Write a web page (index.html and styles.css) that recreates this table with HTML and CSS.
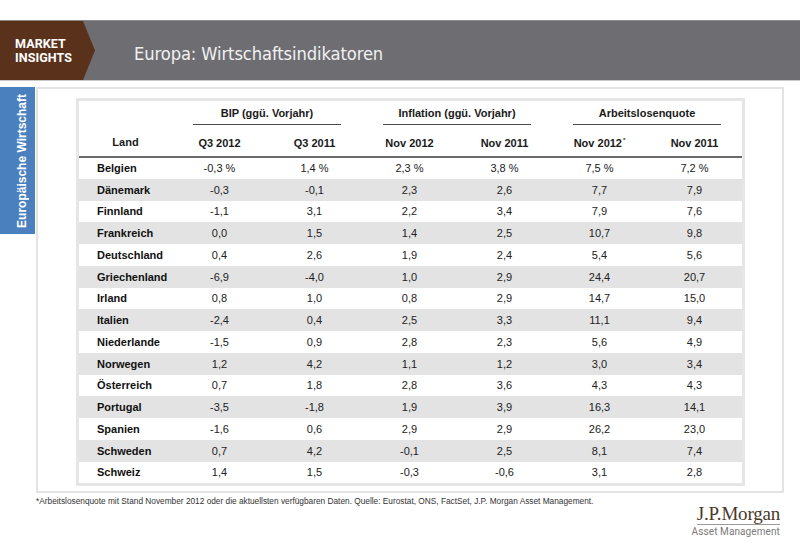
FILE: index.html
```html
<!DOCTYPE html>
<html lang="de">
<head>
<meta charset="utf-8">
<title>Europa: Wirtschaftsindikatoren</title>
<link rel="stylesheet" href="styles.css">
</head>
<body>
<div class="page">
  <header class="banner">
    <div class="brand"><span>MARKET</span><span>INSIGHTS</span></div>
    <h1 class="title">Europa: Wirtschaftsindikatoren</h1>
  </header>
  <main class="main">
    <div class="sidetab"><span>Europäische Wirtschaft</span></div>
    <section class="panel">
      <div class="frame">
        <table class="data">
          <colgroup>
            <col class="c-land"><col class="c-val"><col class="c-val"><col class="c-val"><col class="c-val"><col class="c-val"><col class="c-val">
          </colgroup>
          <thead>
            <tr class="grp">
              <th class="land-h" rowspan="2">Land</th>
              <th colspan="2"><div class="grp-l">BIP (ggü. Vorjahr)</div></th>
              <th colspan="2"><div class="grp-l">Inflation (ggü. Vorjahr)</div></th>
              <th colspan="2"><div class="grp-l">Arbeitslosenquote</div></th>
            </tr>
            <tr class="sub">
              <th>Q3 2012</th><th>Q3 2011</th><th>Nov 2012</th><th>Nov 2011</th><th>Nov 2012<sup>*</sup></th><th>Nov 2011</th>
            </tr>
          </thead>
          <tbody>
            <tr><td>Belgien</td><td>-0,3 %</td><td>1,4 %</td><td>2,3 %</td><td>3,8 %</td><td>7,5 %</td><td>7,2 %</td></tr>
            <tr><td>Dänemark</td><td>-0,3</td><td>-0,1</td><td>2,3</td><td>2,6</td><td>7,7</td><td>7,9</td></tr>
            <tr><td>Finnland</td><td>-1,1</td><td>3,1</td><td>2,2</td><td>3,4</td><td>7,9</td><td>7,6</td></tr>
            <tr><td>Frankreich</td><td>0,0</td><td>1,5</td><td>1,4</td><td>2,5</td><td>10,7</td><td>9,8</td></tr>
            <tr><td>Deutschland</td><td>0,4</td><td>2,6</td><td>1,9</td><td>2,4</td><td>5,4</td><td>5,6</td></tr>
            <tr><td>Griechenland</td><td>-6,9</td><td>-4,0</td><td>1,0</td><td>2,9</td><td>24,4</td><td>20,7</td></tr>
            <tr><td>Irland</td><td>0,8</td><td>1,0</td><td>0,8</td><td>2,9</td><td>14,7</td><td>15,0</td></tr>
            <tr><td>Italien</td><td>-2,4</td><td>0,4</td><td>2,5</td><td>3,3</td><td>11,1</td><td>9,4</td></tr>
            <tr><td>Niederlande</td><td>-1,5</td><td>0,9</td><td>2,8</td><td>2,3</td><td>5,6</td><td>4,9</td></tr>
            <tr><td>Norwegen</td><td>1,2</td><td>4,2</td><td>1,1</td><td>1,2</td><td>3,0</td><td>3,4</td></tr>
            <tr><td>Österreich</td><td>0,7</td><td>1,8</td><td>2,8</td><td>3,6</td><td>4,3</td><td>4,3</td></tr>
            <tr><td>Portugal</td><td>-3,5</td><td>-1,8</td><td>1,9</td><td>3,9</td><td>16,3</td><td>14,1</td></tr>
            <tr><td>Spanien</td><td>-1,6</td><td>0,6</td><td>2,9</td><td>2,9</td><td>26,2</td><td>23,0</td></tr>
            <tr><td>Schweden</td><td>0,7</td><td>4,2</td><td>-0,1</td><td>2,5</td><td>8,1</td><td>7,4</td></tr>
            <tr><td>Schweiz</td><td>1,4</td><td>1,5</td><td>-0,3</td><td>-0,6</td><td>3,1</td><td>2,8</td></tr>
          </tbody>
        </table>
      </div>
    </section>
  </main>
  <footer class="footer">
    <p class="note">*Arbeitslosenquote mit Stand November 2012 oder die aktuellsten verfügbaren Daten. Quelle: Eurostat, ONS, FactSet, J.P. Morgan Asset Management.</p>
    <div class="logo">
      <div class="logo-main">J.P.Morgan</div>
      <div class="logo-sub">Asset Management</div>
    </div>
  </footer>
</div>
</body>
</html>
```

FILE: styles.css
```css
* { box-sizing: border-box; }
html, body { margin: 0; padding: 0; background: #ffffff; }
body { width: 800px; height: 553px; overflow: hidden; font-family: "Liberation Sans", Arial, sans-serif; color: #1e1e1e; }
.page { padding-top: 20px; }

.banner {
  height: 61px;
  background: #6e6e72;
  border-top: 1px solid #8a8a8d;
  border-bottom: 1px solid #c9c9cb;
  display: flex;
  align-items: center;
}
.brand {
  align-self: stretch;
  width: 95px;
  background: #5a321c;
  clip-path: polygon(0 0, 83px 0, 95px 50%, 83px 100%, 0 100%);
  display: flex;
  flex-direction: column;
  justify-content: center;
  padding-left: 15px;
  font-family: Roboto, "Liberation Sans", sans-serif;
  font-weight: 700;
  font-size: 12.5px;
  line-height: 14px;
  color: #ffffff;
  letter-spacing: 0.1px;
}
.title {
  margin: 5px 0 0 39px;
  font-family: "DejaVu Sans Condensed", "Liberation Sans", sans-serif;
  font-weight: 400;
  font-size: 18.2px;
  color: #f1f1f2;
  letter-spacing: -0.1px;
}

.main {
  display: flex;
  align-items: flex-start;
  margin-top: 6px;
  height: 406px;
}
.sidetab {
  width: 35px;
  height: 147px;
  background: #4b80bf;
  display: flex;
  align-items: center;
  justify-content: flex-end;
  padding-right: 3px;
}
.sidetab span {
  writing-mode: vertical-rl;
  transform: rotate(180deg);
  color: #ffffff;
  font-weight: 700;
  font-size: 12px;
  white-space: nowrap;
  padding-left: 3px;
}
.panel {
  margin-left: 1px;
  width: 748px;
  height: 406px;
  border: 2px solid #e3e3e3;
  padding: 9px 0 0 38px;
}
.frame {
  width: 669px;
  border: 3px solid #e6e6e6;
  background: #ffffff;
}

.data {
  border-collapse: collapse;
  table-layout: fixed;
  width: 663px;
  font-size: 11px;
}
.c-land { width: 93px; }
.c-val { width: 95px; }
.data th { font-weight: 700; color: #1a1a1a; padding: 0; text-align: center; }
.grp th { height: 24px; vertical-align: top; }
.grp-l {
  margin: 0 21px;
  height: 24px;
  line-height: 24px;
  border-bottom: 1px solid #4a4a4a;
}
.sub th { height: 32px; padding-top: 10px; line-height: 16px; vertical-align: top; border-bottom: 2px solid #6a6a6a; }
.sub sup { font-size: 6px; vertical-align: top; line-height: 10px; margin-left: 1px; }
.grp .land-h { vertical-align: bottom; padding-bottom: 6px; line-height: 16px; border-bottom: 2px solid #6a6a6a; }

.data td { height: 21.75px; padding: 0; text-align: center; color: #222222; line-height: 14px; }
.data td:first-child { text-align: left; padding-left: 18px; font-weight: 700; color: #111111; }
.data tbody tr:nth-child(even) td { background: #e3e3e3; }

.footer {
  display: flex;
  justify-content: space-between;
  align-items: flex-start;
  padding: 0 20px 0 36px;
}
.note {
  margin: 3px 0 0;
  font-size: 8.3px;
  color: #333333;
}
.logo {
  margin-top: 12px;
  display: flex;
  flex-direction: column;
  align-items: flex-end;
}
.logo-main {
  font-family: "Liberation Serif", "Times New Roman", serif;
  font-size: 19px;
  line-height: 18px;
  color: #4a3828;
  border-bottom: 1px solid #9a9a9a;
  padding-bottom: 1px;
  letter-spacing: -0.2px;
}
.logo-sub {
  font-family: Roboto, "Liberation Sans", sans-serif;
  font-size: 10px;
  line-height: 13px;
  color: #7a7a7a;
  letter-spacing: 0.1px;
}
```
